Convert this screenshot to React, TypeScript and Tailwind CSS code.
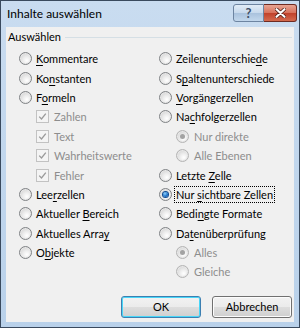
import React from 'react';

type Item = {
  label: string;
  key?: number; // index of underlined letter
  kind: 'radio' | 'check';
  indent?: boolean;
  disabled?: boolean;
  checked?: boolean;
  focus?: boolean;
};

const LEFT: Item[] = [
  { label: 'Kommentare', key: 0, kind: 'radio' },
  { label: 'Konstanten', key: 2, kind: 'radio' },
  { label: 'Formeln', key: 1, kind: 'radio' },
  { label: 'Zahlen', kind: 'check', indent: true, disabled: true, checked: true },
  { label: 'Text', kind: 'check', indent: true, disabled: true, checked: true },
  { label: 'Wahrheitswerte', kind: 'check', indent: true, disabled: true, checked: true },
  { label: 'Fehler', kind: 'check', indent: true, disabled: true, checked: true },
  { label: 'Leerzellen', key: 3, kind: 'radio' },
  { label: 'Aktueller Bereich', key: 10, kind: 'radio' },
  { label: 'Aktuelles Array', key: 14, kind: 'radio' },
  { label: 'Objekte', key: 1, kind: 'radio' },
];

const RIGHT: Item[] = [
  { label: 'Zeilenunterschiede', key: 16, kind: 'radio' },
  { label: 'Spaltenunterschiede', key: 1, kind: 'radio' },
  { label: 'Vorgängerzellen', key: 0, kind: 'radio' },
  { label: 'Nachfolgerzellen', key: 2, kind: 'radio' },
  { label: 'Nur direkte', kind: 'radio', indent: true, disabled: true, checked: true },
  { label: 'Alle Ebenen', kind: 'radio', indent: true, disabled: true },
  { label: 'Letzte Zelle', key: 7, kind: 'radio' },
  { label: 'Nur sichtbare Zellen', key: 4, kind: 'radio', checked: true, focus: true },
  { label: 'Bedingte Formate', key: 4, kind: 'radio' },
  { label: 'Datenüberprüfung', key: 2, kind: 'radio' },
  { label: 'Alles', kind: 'radio', indent: true, disabled: true, checked: true },
  { label: 'Gleiche', kind: 'radio', indent: true, disabled: true },
];

function Radio({ checked, disabled }: { checked?: boolean; disabled?: boolean }) {
  return (
    <span
      className={`flex w-[13px] h-[13px] shrink-0 items-center justify-center rounded-full border ${
        disabled ? 'border-[#b4b4b4]' : 'border-[#7f8285]'
      } bg-[radial-gradient(circle_at_62%_68%,#ffffff_0%,#eeeeee_35%,#c8c8c8_100%)] shadow-[inset_0_0_0_1px_#e8e8e8]`}
    >
      {checked && (
        <span
          className={`w-[5px] h-[5px] rounded-full ${
            disabled
              ? 'bg-[#a3a3a3]'
              : 'bg-[radial-gradient(circle_at_40%_35%,#8fd3ff_0%,#1c72c9_55%,#0b3f8a_100%)] ring-1 ring-[#0e4a91]'
          }`}
        />
      )}
    </span>
  );
}

function Check({ checked }: { checked?: boolean }) {
  return (
    <span className="flex w-[13px] h-[13px] shrink-0 items-center justify-center border border-[#c2c2c2] bg-[#f4f4f4]">
      {checked && (
        <svg width="9" height="9" viewBox="0 0 9 9">
          <path d="M1.2 4.6 L3.5 7 L7.8 1.6" fill="none" stroke="#9a9a9a" strokeWidth="1.3" />
        </svg>
      )}
    </span>
  );
}

function Label({ item }: { item: Item }) {
  const { label, key } = item;
  const text =
    key === undefined ? (
      label
    ) : (
      <>
        {label.slice(0, key)}
        <span className="underline underline-offset-2">{label[key]}</span>
        {label.slice(key + 1)}
      </>
    );
  return (
    <span
      className={`leading-[13px] ${item.disabled ? 'text-[#8d8d8d]' : 'text-black'} ${
        item.focus ? 'border border-dotted border-black px-[1px] -ml-[2px] py-[1px]' : ''
      }`}
    >
      {text}
    </span>
  );
}

function Row({ item }: { item: Item }) {
  return (
    <div className={`flex h-[19.4px] items-center ${item.indent ? 'pl-[17px] gap-[5px]' : 'gap-[4px]'}`}>
      {item.kind === 'radio' ? (
        <Radio checked={item.checked} disabled={item.disabled} />
      ) : (
        <Check checked={item.checked} />
      )}
      <Label item={item} />
    </div>
  );
}

function Button({ children, primary }: { children: React.ReactNode; primary?: boolean }) {
  return (
    <div
      className={`flex w-[80px] h-[22px] items-center justify-center rounded-[3px] border ${
        primary ? 'border-[#3c7fb1] shadow-[inset_0_0_0_1px_#48d6f8]' : 'border-[#707070] shadow-[inset_0_0_0_1px_#fcfcfc]'
      } bg-[linear-gradient(#f2f2f2_0%,#ebebeb_50%,#dddddd_51%,#cfcfcf_100%)] text-black`}
    >
      {children}
    </div>
  );
}

export default function App() {
  return (
    <div
      className="w-[300px] h-[328px] flex flex-col border border-[#3a4a5e] bg-[linear-gradient(#c9dcf0,#b9d1ea)] text-[11px]"
      style={{ fontFamily: 'Lato, "Noto Sans", sans-serif' }}
    >
      {/* title bar */}
      <div className="flex h-[26px] shrink-0 items-start">
        <span className="pl-[6px] pt-[5px] text-[12px] leading-[16px] text-black">Inhalte auswählen</span>
        <div className="ml-auto flex pt-[3px] pr-[2px]">
          <div className="flex w-[31px] h-[18px] items-center justify-center rounded-l-[3px] border border-[#6d84a1] bg-[linear-gradient(#e2ecf7_0%,#c6d8ec_50%,#a9c2dd_51%,#c2d7ec_100%)]">
            <span className="text-[13px] leading-none font-bold text-[#3d4f66]">?</span>
          </div>
          <div className="flex w-[33px] h-[18px] items-center justify-center rounded-r-[3px] border border-l-0 border-[#6e2b22] bg-[linear-gradient(#e8a493_0%,#d7705a_50%,#c0412a_51%,#d46a4e_100%)]">
            <svg width="11" height="10" viewBox="0 0 11 10">
              <path d="M1.5 1.2 L9.5 8.8 M9.5 1.2 L1.5 8.8" stroke="#4b1a12" strokeWidth="3.6" strokeLinecap="round" />
              <path d="M1.5 1.2 L9.5 8.8 M9.5 1.2 L1.5 8.8" stroke="#ffffff" strokeWidth="2.2" strokeLinecap="round" />
            </svg>
          </div>
        </div>
      </div>

      {/* client area */}
      <div className="flex flex-1 flex-col mx-[5px] mb-[5px] bg-[#f0f0f0] pt-[3px]">
        <div className="flex h-[14px] items-center pl-[2px] pr-[2px]">
          <span className="leading-[14px] text-black">Auswählen</span>
          <div className="ml-[4px] flex-1 h-px bg-[#d5dfe5]" />
        </div>
        <div className="grid grid-cols-[140px_1fr] pl-[13px] pt-[5px]">
          <div className="flex flex-col">
            {LEFT.map((it) => (
              <Row key={it.label} item={it} />
            ))}
          </div>
          <div className="flex flex-col">
            {RIGHT.map((it) => (
              <Row key={it.label} item={it} />
            ))}
          </div>
        </div>
        <div className="mt-auto flex justify-end gap-[11px] pr-[2px] pb-[4px]">
          <Button primary>OK</Button>
          <Button>Abbrechen</Button>
        </div>
      </div>
    </div>
  );
}
